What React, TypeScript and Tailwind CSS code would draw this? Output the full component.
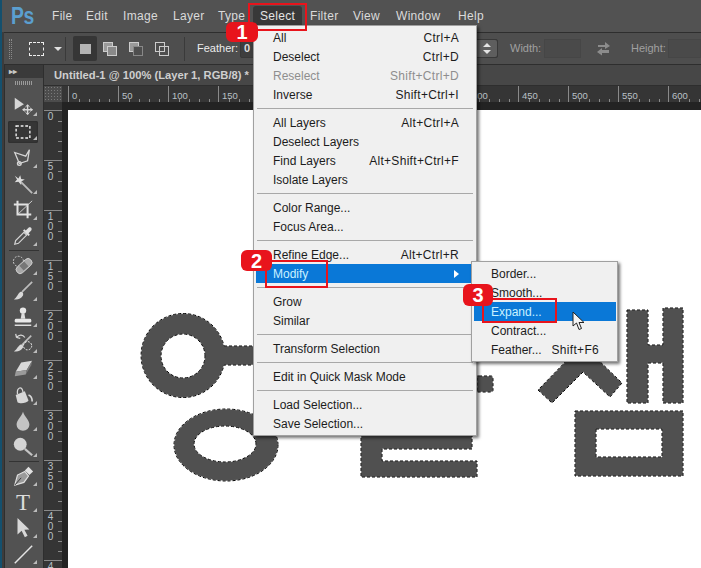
import type { ReactNode } from "react"

const UI_FONT = "font-['Liberation_Sans','Noto_Sans',sans-serif]"

const topMenus = [
  { label: "File", width: "w-[34px]" },
  { label: "Edit", width: "w-[37px]" },
  { label: "Image", width: "w-[50px]" },
  { label: "Layer", width: "w-[45px]" },
  { label: "Type", width: "w-[43px]" },
  { label: "Select", width: "w-[49px]" },
  { label: "Filter", width: "w-[43px]" },
  { label: "View", width: "w-[43px]" },
  { label: "Window", width: "w-[62px]" },
  { label: "Help", width: "w-[40px]" },
]

type MenuRow = { label: string; shortcut?: string; disabled?: boolean; active?: boolean; submenu?: boolean } | "sep"

const selectMenu: MenuRow[] = [
  { label: "All", shortcut: "Ctrl+A" },
  { label: "Deselect", shortcut: "Ctrl+D" },
  { label: "Reselect", shortcut: "Shift+Ctrl+D", disabled: true },
  { label: "Inverse", shortcut: "Shift+Ctrl+I" },
  "sep",
  { label: "All Layers", shortcut: "Alt+Ctrl+A" },
  { label: "Deselect Layers" },
  { label: "Find Layers", shortcut: "Alt+Shift+Ctrl+F" },
  { label: "Isolate Layers" },
  "sep",
  { label: "Color Range..." },
  { label: "Focus Area..." },
  "sep",
  { label: "Refine Edge...", shortcut: "Alt+Ctrl+R" },
  { label: "Modify", active: true, submenu: true },
  "sep",
  { label: "Grow" },
  { label: "Similar" },
  "sep",
  { label: "Transform Selection" },
  "sep",
  { label: "Edit in Quick Mask Mode" },
  "sep",
  { label: "Load Selection..." },
  { label: "Save Selection..." },
]

const modifyMenu: MenuRow[] = [
  { label: "Border..." },
  { label: "Smooth..." },
  { label: "Expand...", active: true },
  { label: "Contract..." },
  { label: "Feather...", shortcut: "Shift+F6" },
]

function Row({ row, rowPad }: { row: Exclude<MenuRow, "sep">; rowPad: string }) {
  return (
    <div
      className={`flex h-[19px] items-center justify-between pl-[17px] text-[12px] ${rowPad} ${
        row.active ? "bg-[#0a78d7] text-[#c9f1ff]" : row.disabled ? "text-[#8e8e8e]" : "text-[#1c1c1c]"
      }`}
    >
      <span>{row.label}</span>
      {row.shortcut && <span className="tracking-[0.3px]">{row.shortcut}</span>}
      {row.submenu && <span className="h-0 w-0 border-y-[4px] border-l-[5px] border-y-transparent border-l-white" />}
    </div>
  )
}

function Menu({ rows, rowPad }: { rows: MenuRow[]; rowPad: string }) {
  return (
    <>
      {rows.map((row, i) =>
        row === "sep" ? (
          <div key={i} className="flex h-[9px] items-center pl-[1px]">
            <div className="h-px w-full bg-[#a8a8a8]" />
          </div>
        ) : (
          <Row key={i} row={row} rowPad={rowPad} />
        ),
      )}
    </>
  )
}

function Badge({ n, className }: { n: number; className: string }) {
  return (
    <div
      className={`absolute flex items-center justify-center rounded-[6px] bg-[#e8141c] font-['Liberation_Sans',sans-serif] text-[20px] font-bold text-white ${className}`}
    >
      {n}
    </div>
  )
}

function Ico({ children, size = 22 }: { children: ReactNode; size?: number }) {
  return (
    <svg width={size} height={size} viewBox="0 0 24 24" fill="none" stroke="#d6d6d6" strokeWidth="1.5">
      {children}
    </svg>
  )
}

const tools: (ReactNode | "sep")[] = [
  <Ico key="move">
    <path d="M3 3 L3 16 L13 10 Z" fill="#d6d6d6" stroke="none" />
    <path d="M17 11 V21 M12 16 H22" strokeWidth="1.6" />
    <path d="M15 13 L17 10.5 L19 13 M15 19 L17 21.5 L19 19 M14.5 14 L11.5 16 L14.5 18 M19.5 14 L22.5 16 L19.5 18" strokeWidth="1" />
  </Ico>,
  <Ico key="marquee">
    <rect x="4.5" y="5.5" width="15" height="13" stroke="#f0f0f0" strokeDasharray="3 2" />
  </Ico>,
  <Ico key="lasso">
    <path d="M3 6 L15 10 L19 3 L17 15 L8 18 Z" strokeWidth="1.4" />
    <circle cx="8" cy="18" r="2" />
  </Ico>,
  <Ico key="wand">
    <path d="M3 3 L5.5 7 L3 10 L7 9.5 L10 13 L10.5 9 L14 7 L10 6.5 L9 2.5 L7 6 Z" fill="#dddddd" stroke="none" />
    <path d="M10 10 L22 22" strokeWidth="2" stroke="#bcbcbc" />
  </Ico>,
  <Ico key="crop">
    <path d="M6 2 V17 H21" strokeWidth="2.2" stroke="#e2e2e2" />
    <path d="M2 6 H17 V21" strokeWidth="2.2" stroke="#e2e2e2" />
    <path d="M6 17 L22 2" strokeWidth="1" />
  </Ico>,
  <Ico key="dropper">
    <path d="M3 21 L4 17 L13 8 L16 11 L7 20 Z" strokeWidth="1.3" />
    <path d="M12 6 L18 12 L19.5 10.5 L18 9 L21 6 C22.5 4 20 1.5 18 3 L15 6 L13.5 4.5 Z" fill="#e0e0e0" stroke="none" />
  </Ico>,
  "sep",
  <Ico key="heal">
    <circle cx="7" cy="8" r="5.5" strokeWidth="1" strokeDasharray="2 1.5" />
    <rect x="3" y="9" width="20" height="8.5" rx="4" transform="rotate(-42 13 13)" fill="#a8a8a8" stroke="#d0d0d0" strokeWidth="1" />
    <rect x="9.5" y="9.5" width="7" height="7" transform="rotate(-42 13 13)" fill="#777777" stroke="none" />
  </Ico>,
  <Ico key="brush">
    <path d="M22 2 L11 13" strokeWidth="1.8" stroke="#bdbdbd" />
    <path d="M2 21 C5 20 6 15 9 13 C11 12 13 14 12 17 C10 21 5 22 2 21 Z" fill="#d8d8d8" stroke="none" />
  </Ico>,
  <Ico key="stamp">
    <circle cx="12" cy="5" r="3.5" fill="#e8e8e8" stroke="none" />
    <path d="M10.5 8 H13.5 L14.5 14 H9.5 Z" fill="#e0e0e0" stroke="none" />
    <rect x="3" y="14" width="18" height="4" rx="1.5" fill="#e8e8e8" stroke="none" />
    <path d="M3 21 H21" strokeWidth="1.5" stroke="#e8e8e8" />
  </Ico>,
  <Ico key="history">
    <path d="M5 6 C8 2 12 3 14 6 M5 6 L4 2 M5 6 L9 7" strokeWidth="1.4" />
    <path d="M21 4 L11 14" strokeWidth="1.8" stroke="#bdbdbd" />
    <path d="M2 21 C5 20 6 16 9 14 C11 13 13 15 12 17 C10 21 5 22 2 21 Z" fill="#d8d8d8" stroke="none" />
    <circle cx="17" cy="15" r="4.5" strokeWidth="1" strokeDasharray="2 1.5" stroke="#ffffff" />
  </Ico>,
  <Ico key="eraser">
    <path d="M10 5 L22 3 L16 13 L4 15 Z" fill="#d8d8d8" stroke="none" />
    <path d="M4 15 L16 13 L15 18 L3 20 Z" fill="#9a9a9a" stroke="none" />
    <path d="M16 13 L22 3 L21 8 L15 18 Z" fill="#7c7c7c" stroke="none" />
  </Ico>,
  <Ico key="bucket">
    <path d="M4 12 L14 8 L18 18 C16 21 9 22 6 20 Z" fill="#d8d8d8" stroke="none" />
    <path d="M6 11 C5 4 11 1 12 9" strokeWidth="1.4" />
    <path d="M18 12 C21 13 22 16 22 19" strokeWidth="1.8" stroke="#d8d8d8" />
  </Ico>,
  <Ico key="blur">
    <path d="M12 2 C14 8 19 11 19 16 A7 6.5 0 0 1 5 16 C5 11 10 8 12 2 Z" fill="#c4c4c4" stroke="none" />
  </Ico>,
  <Ico key="dodge">
    <circle cx="9" cy="9" r="7" fill="#d4d4d4" stroke="none" />
    <path d="M14 14 L22 21" strokeWidth="2.4" stroke="#c4c4c4" />
  </Ico>,
  "sep",
  <Ico key="pen">
    <path d="M3 22 L6 11 L14 7 L18 12 L13 19 Z" strokeWidth="1.3" fill="#9a9a9a" stroke="#e0e0e0" />
    <path d="M3 22 L10 14" strokeWidth="1" stroke="#333333" />
    <path d="M14 6 L18 2 L23 7 L19 11 Z" fill="#e0e0e0" stroke="none" />
  </Ico>,
  <span key="type" className="font-['Liberation_Serif',serif] text-[23px] leading-none text-[#dcdcdc]">
    T
  </span>,
  <Ico key="path">
    <path d="M6 1 L6 19 L10.5 15 L14 22 L17 20.5 L13.5 14 L19 13.5 Z" fill="#d8d8d8" stroke="none" />
  </Ico>,
  <Ico key="line">
    <path d="M3 22 L22 3" strokeWidth="1.6" stroke="#e4e4e4" />
  </Ico>,
]

function ToolSlot({ tool, selected }: { tool: ReactNode; selected: boolean }) {
  return (
    <div
      className={`relative ml-[3px] mr-[5px] flex items-center justify-center rounded-[2px] ${
        selected ? "my-[2px] h-[22px] bg-[#363636] shadow-[inset_0_0_2px_#222]" : "h-[26px]"
      }`}
    >
      {tool}
      <span className="absolute bottom-[3px] right-[1px] h-0 w-0 border-b-[4px] border-l-[4px] border-b-[#bbbbbb] border-l-transparent" />
    </div>
  )
}

function HorizontalRuler() {
  return (
    <div className="flex h-[16px] flex-1 overflow-hidden bg-[#353535] pl-[6px]">
      {Array.from({ length: 13 }, (_, i) => (
        <div key={i} className="relative h-full w-[50px] shrink-0 border-l border-[#8a8a8a]">
          <span className="block pl-[3px] pt-[3px] text-[9.5px] leading-[13px] text-[#b9c0c6]">{i * 50}</span>
          <div className="absolute bottom-0 left-0 flex items-end">
            {[0, 1, 2, 3, 4].map((t) => (
              <span key={t} className={`w-[10px] border-l border-[#8a8a8a] ${t === 0 ? "h-0 border-transparent" : "h-[3px]"}`} />
            ))}
          </div>
        </div>
      ))}
    </div>
  )
}

function VerticalRuler() {
  return (
    <div className="flex w-[18px] flex-col overflow-hidden bg-[#353535] pt-[8px]">
      {Array.from({ length: 10 }, (_, i) => (
        <div key={i} className="relative h-[50px] w-full shrink-0 border-t border-[#8a8a8a]">
          <div className="flex w-[13px] flex-col items-center pt-[1px] text-[10px] leading-[10px] text-[#b9c0c6]">
            {String(i * 50)
              .split("")
              .map((d, k) => (
                <span key={k}>{d}</span>
              ))}
          </div>
          <div className="absolute right-0 top-0 flex flex-col items-end">
            {[0, 1, 2, 3, 4].map((t) => (
              <span key={t} className={`h-[10px] w-[4px] border-t border-[#8a8a8a] ${t === 0 ? "border-transparent" : ""}`} />
            ))}
          </div>
        </div>
      ))}
    </div>
  )
}

const artPaths = [
  "M224 346 L258 346 L258 365 L224 365 A42 42 0 1 1 224 346 Z M205 356 A22 22 0 1 0 161 356 A22 22 0 1 0 205 356 Z",
  "M278 445 A52 36 0 1 1 174 445 A52 36 0 1 1 278 445 Z M256 444 A31 18 0 1 0 194 444 A31 18 0 1 0 256 444 Z",
  "M361 420 H472 V449 H382 V461 H477 V477 H361 Z",
  "M479 376 H491 Q493 376 493 378 V390 Q493 392 491 392 H477 V376 Z",
  "M538 390 L552 403 L583 372 L610 397 L622 383 L590 352 L575 352 Z",
  "M627 310 H648 V345 H663 V308 H683 V403 H663 V363 H648 V403 H627 Z",
  "M575 411 H683 V476 H575 Z M596 429 V457 H662 V429 Z",
]

function Artwork() {
  return (
    <svg className="absolute inset-0 h-full w-full" viewBox="68 110 633 458" fill="#505050" fillRule="evenodd" strokeWidth="1">
      {artPaths.map((d) => (
        <path key={d} d={d} stroke="#ffffff" strokeOpacity="0.45" />
      ))}
      {artPaths.map((d) => (
        <path key={d} d={d} fill="none" stroke="#000000" strokeDasharray="3 2" />
      ))}
    </svg>
  )
}

export default function App() {
  return (
    <div className={`relative flex h-[568px] w-[701px] flex-col overflow-hidden border-l-2 border-[#14506e] bg-[#3c3c3c] ${UI_FONT}`}>
      {/* Menu bar */}
      <div className="flex h-[32px] shrink-0 items-center bg-[#525252] text-[12px] tracking-[0.3px] text-[#dadada]">
        <span className="ml-[9px] inline-block w-[39px] origin-left scale-x-[0.84] text-[23px] font-bold tracking-[-0.5px] text-[#5b9fd0]">Ps</span>
        <div className="ml-[2px] flex">
          {topMenus.map((m) => (
            <span key={m.label} className={m.width}>
              {m.label}
            </span>
          ))}
        </div>
      </div>

      {/* Options bar */}
      <div className="ml-[2px] flex h-[33px] shrink-0 items-center border-y border-[#2e2e2e] bg-[#4e4e4e] text-[11px]">
        <div className="ml-[5px] h-[20px] w-[3px] shrink-0 border-x border-dotted border-[#8a8a8a]" />
        <div className="ml-[17px] h-[14px] w-[15px] shrink-0 border border-dashed border-[#efefef]" />
        <span className="ml-[10px] h-0 w-0 shrink-0 border-x-[4px] border-t-[4px] border-x-transparent border-t-[#e0e0e0]" />
        <div className="ml-[3px] h-[24px] w-px shrink-0 bg-[#3a3a3a]" />
        <div className="ml-[7px] flex h-[25px] w-[24px] shrink-0 items-center justify-center rounded-[2px] bg-[#363636]">
          <div className="h-[10px] w-[11px] bg-[#b4b4b4]" />
        </div>
        <div className="flex h-[25px] w-[26px] shrink-0 items-center justify-center">
          <div className="relative h-[14px] w-[14px]">
            <div className="h-[10px] w-[10px] border border-[#cccccc] bg-[#9a9a9a]" />
            <div className="absolute bottom-0 right-0 h-[10px] w-[10px] border border-[#cccccc] bg-[#8a8a8a]" />
          </div>
        </div>
        <div className="flex h-[25px] w-[26px] shrink-0 items-center justify-center">
          <div className="relative h-[14px] w-[14px]">
            <div className="h-[10px] w-[10px] border border-[#cccccc] bg-[#9a9a9a]" />
            <div className="absolute bottom-0 right-0 h-[10px] w-[10px] border border-[#888888] bg-[#4e4e4e]" />
          </div>
        </div>
        <div className="flex h-[25px] w-[26px] shrink-0 items-center justify-center">
          <div className="relative h-[14px] w-[14px]">
            <div className="h-[10px] w-[10px] border border-[#cccccc]" />
            <div className="absolute bottom-0 right-0 h-[10px] w-[10px] border border-[#cccccc]" />
          </div>
        </div>
        <div className="ml-[9px] h-[24px] w-px shrink-0 bg-[#3a3a3a]" />
        <span className="ml-[12px] w-[43px] shrink-0 text-[#ececec]">Feather:</span>
        <div className="flex h-[19px] w-[258px] shrink-0 items-center justify-between rounded-[2px] border border-[#383838] bg-[#3e3e3e] pl-[3px] font-bold text-[#dddddd]">
          0 px
          <div className="flex h-full w-[20px] items-center justify-center rounded-r-[2px] bg-[#5e5e5e]">
            <svg width="8" height="11" viewBox="0 0 8 11" fill="#e4e4e4">
              <path d="M4 0 L8 4 H0 Z M4 11 L0 7 H8 Z" />
            </svg>
          </div>
        </div>
        <span className="ml-[12px] w-[34px] shrink-0 text-[#a0a0a0]">Width:</span>
        <div className="h-[19px] w-[37px] shrink-0 border border-[#464646] bg-[#4a4a4a]" />
        <svg className="ml-[15px] shrink-0" width="15" height="15" viewBox="0 0 15 15" fill="#8c8c8c">
          <path d="M2 4 H9 V1 L14 5 L9 8 V6 H2 Z M13 9 H6 V7 L1 11 L6 14.5 V12 H13 Z" />
        </svg>
        <span className="ml-[20px] w-[37px] shrink-0 text-[#a0a0a0]">Height:</span>
        <div className="h-[19px] min-w-0 flex-1 border border-[#464646] bg-[#4a4a4a]" />
      </div>

      <div className="ml-[2px] flex min-h-0 flex-1">
        {/* Tools panel */}
        <div className="flex w-[40px] shrink-0 flex-col border-x border-[#2e2e2e] bg-[#525252]">
          <div className="flex h-[13px] items-center bg-[#3a3a3a] pl-[4px] text-[8px] font-bold leading-none text-[#c8c8c8]">▸▸</div>
          <div className="mx-auto mb-[8px] mt-[3px] h-[4px] w-[18px] bg-[repeating-linear-gradient(90deg,#9a9a9a_0,#9a9a9a_1px,transparent_1px,transparent_2px)]" />
          <div className="flex flex-col">
            {tools.map((tool, i) =>
              tool === "sep" ? (
                <div key={i} className="flex h-[3px] items-center px-[4px]">
                  <div className="h-px w-full bg-[#333333]" />
                </div>
              ) : (
                <ToolSlot key={i} tool={tool} selected={i === 1} />
              ),
            )}
          </div>
        </div>

        {/* Document */}
        <div className="flex min-w-0 flex-1 flex-col">
          <div className="flex h-[21px] shrink-0 items-center border-b border-[#2e2e2e] bg-[#474747] pl-[10px] text-[11.2px] font-bold text-[#cfcfcf]">
            Untitled-1 @ 100% (Layer 1, RGB/8) *
          </div>
          <div className="flex shrink-0">
            <div className="h-[16px] w-[18px] bg-[#4c4c4c] bg-[radial-gradient(#7a7a7a_0.5px,transparent_0.5px)] bg-[length:3px_3px]" />
            <HorizontalRuler />
          </div>
          <div className="flex min-h-0 flex-1">
            <VerticalRuler />
            <div className="flex min-w-0 flex-1 flex-col bg-[#232323] pl-[6px] pt-[8px]">
              <div className="relative min-h-0 flex-1 overflow-hidden bg-white">
                <Artwork />
              </div>
            </div>
          </div>
        </div>
      </div>

      {/* Open menu tab */}
      <div className="absolute left-[251px] top-[6px] flex h-[19px] w-[49px] items-center justify-center rounded-t-[3px] bg-[#383838] text-[12px] tracking-[0.3px] text-[#e4e4e4]">
        Select
      </div>

      {/* Select menu */}
      <div className="absolute left-[251px] top-[25px] w-[224px] border border-[#a0a0a0] bg-[#f0f0f0] pb-[2px] pl-[2px] pr-[3px] pt-[2px] shadow-[2px_2px_3px_rgba(0,0,0,0.55)]">
        <Menu rows={selectMenu} rowPad="pr-[14px]" />
      </div>

      {/* Modify submenu */}
      <div className="absolute left-[469px] top-[261px] w-[147px] border border-[#a0a0a0] bg-[#f0f0f0] py-[2px] pl-[2px] pr-[1px] shadow-[2px_2px_3px_rgba(0,0,0,0.55)]">
        <Menu rows={modifyMenu} rowPad="pr-[17px]" />
      </div>

      {/* Callouts */}
      <div className="absolute left-[246px] top-[3px] h-[28px] w-[59px] border-2 border-[#e8141c]" />
      <div className="absolute left-[263px] top-[260px] h-[28px] w-[63px] border-2 border-[#e8141c]" />
      <div className="absolute left-[480px] top-[298px] h-[25px] w-[75px] border-2 border-[#e8141c]" />
      <Badge n={1} className="left-[224px] top-[22px] h-[20px] w-[32px]" />
      <Badge n={2} className="left-[239px] top-[250px] h-[21px] w-[31px]" />
      <Badge n={3} className="left-[461px] top-[284px] h-[22px] w-[30px]" />

      {/* Mouse pointer */}
      <svg className="absolute left-[570px] top-[311px]" width="14" height="20" viewBox="0 0 14 20">
        <path d="M1 1 V15 L4.5 12 L7 18.5 L9.5 17.5 L7 11.5 L12 11.5 Z" fill="#f4f4f4" stroke="#222222" strokeWidth="1" />
      </svg>
    </div>
  )
}
